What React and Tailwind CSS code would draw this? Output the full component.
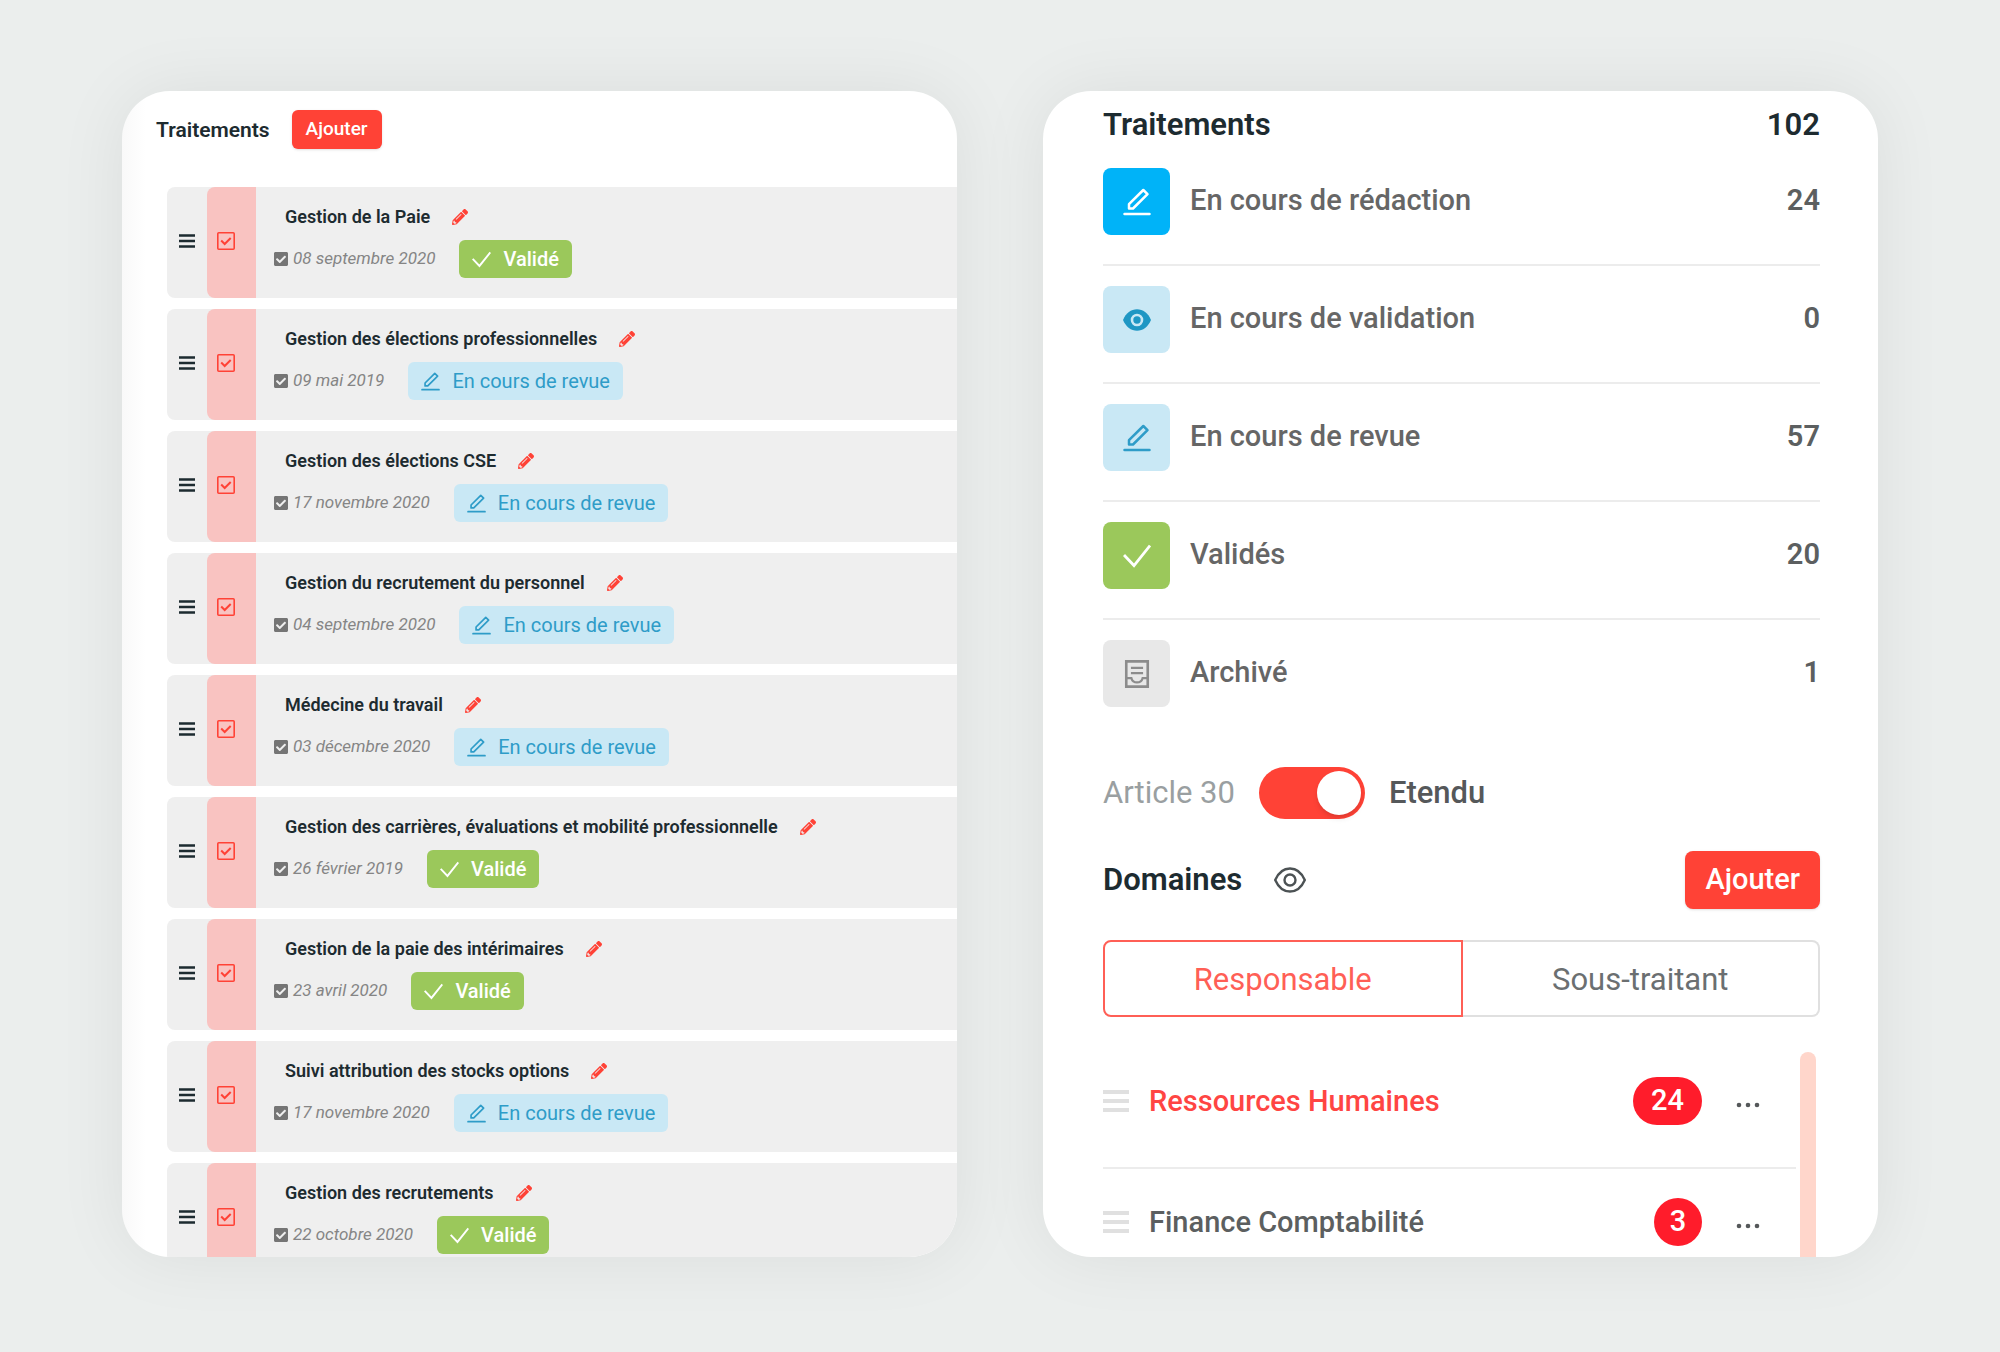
import { useState } from "react";
import { FaCheckSquare, FaPencilAlt } from "react-icons/fa";

const treatments = [
  { title: "Gestion de la Paie", date: "08 septembre 2020", status: "valid" },
  {
    title: "Gestion des élections professionnelles",
    date: "09 mai 2019",
    status: "review",
  },
  {
    title: "Gestion des élections CSE",
    date: "17 novembre 2020",
    status: "review",
  },
  {
    title: "Gestion du recrutement du personnel",
    date: "04 septembre 2020",
    status: "review",
  },
  { title: "Médecine du travail", date: "03 décembre 2020", status: "review" },
  {
    title: "Gestion des carrières, évaluations et mobilité professionnelle",
    date: "26 février 2019",
    status: "valid",
  },
  {
    title: "Gestion de la paie des intérimaires",
    date: "23 avril 2020",
    status: "valid",
  },
  {
    title: "Suivi attribution des stocks options",
    date: "17 novembre 2020",
    status: "review",
  },
  { title: "Gestion des recrutements", date: "22 octobre 2020", status: "valid" },
];

const stats = [
  {
    label: "En cours de rédaction",
    count: 24,
    icon: EditIcon,
    tile: "bg-[#00b3f8] text-white",
  },
  {
    label: "En cours de validation",
    count: 0,
    icon: EyeSolidIcon,
    tile: "bg-[#c9e8f5] text-[#1f97c4]",
  },
  {
    label: "En cours de revue",
    count: 57,
    icon: EditIcon,
    tile: "bg-[#c9e8f5] text-[#2e9cc8]",
  },
  {
    label: "Validés",
    count: 20,
    icon: CheckIcon,
    tile: "bg-[#9bc85b] text-white",
  },
  {
    label: "Archivé",
    count: 1,
    icon: ArchiveIcon,
    tile: "bg-[#e8e8e8] text-[#8c8c8c]",
  },
];

const domains = [
  { name: "Ressources Humaines", count: 24 },
  { name: "Finance Comptabilité", count: 3 },
];

function EditIcon({ className }) {
  return (
    <svg
      className={className}
      viewBox="0 0 28 28"
      fill="none"
      stroke="currentColor"
      strokeWidth="2.5"
      aria-hidden="true"
    >
      <path d="M6 20.5v-4.3L20.3 2l4.2 4.2L10 20.500z" strokeLinejoin="round" />
      <path d="M1.5 26h25" strokeLinecap="round" />
    </svg>
  );
}

function CheckIcon({ className }) {
  return (
    <svg
      className={className}
      viewBox="0 0 28 28"
      fill="none"
      stroke="currentColor"
      strokeWidth="2.8"
      aria-hidden="true"
    >
      <path d="M1 13 11 23.500 27 3.500" />
    </svg>
  );
}

function EyeSolidIcon({ className }) {
  return (
    <svg className={className} viewBox="0 0 28 28" fill="none" aria-hidden="true">
      <path
        d="M0 14C3 7 8 3.300 14 3.300S25 7 28 14c-3 7-8 10.700-14 10.700S3 21 0 14z"
        fill="currentColor"
      />
      <circle cx="14" cy="14" r="5" stroke="#c9e8f5" strokeWidth="2.600" />
    </svg>
  );
}

function EyeIcon({ className }) {
  return (
    <svg
      className={className}
      viewBox="0 0 32 26"
      fill="none"
      stroke="currentColor"
      strokeWidth="2.400"
      aria-hidden="true"
    >
      <path d="M1.200 13C4.500 5.500 9.800 1.500 16 1.500S27.500 5.500 30.800 13C27.500 20.500 22.200 24.500 16 24.500S4.500 20.500 1.200 13z" />
      <circle cx="16" cy="13" r="5.500" />
    </svg>
  );
}

function ArchiveIcon({ className }) {
  return (
    <svg
      className={className}
      viewBox="0 0 30 30"
      fill="none"
      stroke="currentColor"
      strokeWidth="2.800"
      aria-hidden="true"
    >
      <path d="M3.500 1.500h23v27h-23z" />
      <path d="M8.500 8.500h13M8.500 14h13" strokeWidth="2.400" />
      <path
        d="M3.500 19.500h5.500c.8 3 2.800 4.500 6 4.500s5.200-1.500 6-4.500h5.500"
        strokeWidth="2.400"
      />
    </svg>
  );
}

function CheckBoxIcon({ className }) {
  return (
    <svg
      className={className}
      viewBox="0 0 18 18"
      fill="none"
      stroke="currentColor"
      strokeWidth="1.600"
      aria-hidden="true"
    >
      <rect x=".8" y=".8" width="16.400" height="16.400" rx="1" />
      <path d="m4.200 8.500 3.500 3.500 6-6" strokeWidth="2" />
    </svg>
  );
}

function DragIcon({ className }) {
  return (
    <svg
      className={className}
      viewBox="0 0 26 24"
      stroke="currentColor"
      strokeWidth="4"
      aria-hidden="true"
    >
      <path d="M0 3h26M0 12h26M0 21h26" />
    </svg>
  );
}

function ListIcon({ className }) {
  return (
    <svg
      className={className}
      viewBox="0 0 16 14"
      stroke="currentColor"
      strokeWidth="2.600"
      aria-hidden="true"
    >
      <path d="M0 1.500h16M0 7h16M0 12.500h16" />
    </svg>
  );
}

function StatusPill({ status }) {
  if (status === "valid") {
    return (
      <span className="flex h-[38px] items-center gap-3 rounded-md bg-[#9bc85b] px-[13px] text-xl font-medium text-white">
        <CheckIcon className="size-[19px]" />
        Validé
      </span>
    );
  }

  return (
    <span className="flex h-[38px] items-center gap-3 rounded-md bg-[#c9e8f5] px-[13px] text-xl whitespace-nowrap text-[#2e9cc8]">
      <EditIcon className="size-[19px]" />
      En cours de revue
    </span>
  );
}

function TreatmentRow({ treatment }) {
  return (
    <li className="flex h-[111px] shrink-0 rounded-l-lg bg-[#efefef]">
      <button
        type="button"
        aria-label="Déplacer"
        className="flex w-10 items-center justify-center pb-1 text-[#1d2b30]"
      >
        <ListIcon className="h-3.5 w-4" />
      </button>
      <button
        type="button"
        aria-label="Sélectionner"
        className="flex w-[49px] items-center rounded-l-lg bg-[#f9c3c1] pb-1 pl-2.5 text-[#ff4236]"
      >
        <CheckBoxIcon className="size-[18px]" />
      </button>
      <div className="flex flex-col gap-[9px] pt-4 pl-[17px]">
        <div className="flex items-center gap-[22px] pl-3">
          <h3 className="text-lg leading-7 font-semibold whitespace-nowrap text-[#1d2b30]">
            {treatment.title}
          </h3>
          <button type="button" aria-label="Modifier" className="text-[#ff4236]">
            <FaPencilAlt className="size-4" />
          </button>
        </div>
        <div className="flex items-center">
          <FaCheckSquare className="mr-1 size-4 text-[#757575]" />
          <time className="mr-6 text-[17px] whitespace-nowrap text-[#858585] italic">
            {treatment.date}
          </time>
          <StatusPill status={treatment.status} />
        </div>
      </div>
    </li>
  );
}

function TreatmentsPanel() {
  return (
    <section className="overflow-hidden rounded-[48px] bg-linear-to-r from-[#f9f9f9] to-white to-[24px] shadow-[0_0_70px_rgba(0,0,0,0.07)]">
      <header className="flex items-center gap-[22px] pt-[19px] pl-[34px]">
        <h2 className="text-[21px] leading-8 font-semibold text-[#1d2b30]">
          Traitements
        </h2>
        <button
          type="button"
          className="h-[39px] rounded-md bg-[#ff4236] px-3.5 text-[19px] font-medium text-white shadow-sm"
        >
          Ajouter
        </button>
      </header>
      <ul className="mt-[38px] flex flex-col gap-[11px] pl-[45px]">
        {treatments.map((treatment) => (
          <TreatmentRow key={treatment.title} treatment={treatment} />
        ))}
      </ul>
    </section>
  );
}

function StatRow({ stat }) {
  const Icon = stat.icon;

  return (
    <li className="flex items-start border-b-2 border-[#ececec] pt-5 pb-[29px] first:pt-0 last:border-0 last:pb-0">
      <span
        className={`flex size-[67px] items-center justify-center rounded-lg ${stat.tile}`}
      >
        <Icon className="size-7" />
      </span>
      <span className="ml-5 flex-1 text-[29px] leading-[64px] font-medium text-[#666]">
        {stat.label}
      </span>
      <span className="text-[29px] leading-[64px] font-semibold text-[#5c5f60]">
        {stat.count}
      </span>
    </li>
  );
}

function SummaryPanel() {
  const [extended, setExtended] = useState(true);
  const [role, setRole] = useState("Responsable");

  return (
    <section className="flex flex-col overflow-hidden rounded-[48px] bg-white pt-3 pr-[58px] pl-[60px] shadow-[0_0_70px_rgba(0,0,0,0.07)]">
      <h2 className="flex justify-between text-[31px] leading-[44px] font-semibold text-[#1d2b30]">
        <span>Traitements</span>
        <span>102</span>
      </h2>

      <ul className="mt-[21px]">
        {stats.map((stat) => (
          <StatRow key={stat.label} stat={stat} />
        ))}
      </ul>

      <label className="mt-[60px] flex items-center text-[31px] leading-[52px]">
        <span className="text-[#9a9fa1]">Article 30</span>
        <input
          type="checkbox"
          role="switch"
          checked={extended}
          onChange={() => setExtended(!extended)}
          className="peer sr-only"
        />
        <span className="mx-6 flex h-[52px] w-[106px] items-center rounded-full bg-[#c4c4c4] p-1 peer-checked:justify-end peer-checked:bg-[#ff4236]">
          <span className="size-11 rounded-full bg-white shadow-md" />
        </span>
        <span className="font-medium text-[#55585a]">Etendu</span>
      </label>

      <div className="mt-8 flex items-center">
        <h2 className="text-[31px] leading-[44px] font-semibold text-[#1d2b30]">
          Domaines
        </h2>
        <button
          type="button"
          aria-label="Afficher les domaines"
          className="ml-8 text-[#4c5254]"
        >
          <EyeIcon className="h-[26px] w-8" />
        </button>
        <button
          type="button"
          className="ml-auto h-[58px] rounded-lg bg-[#ff4236] px-5 text-[29px] font-medium text-white shadow-sm"
        >
          Ajouter
        </button>
      </div>

      <div className="mt-[31px] flex h-[77px] shrink-0">
        {["Responsable", "Sous-traitant"].map((name) => (
          <button
            key={name}
            type="button"
            aria-pressed={role === name}
            onClick={() => setRole(name)}
            className={`flex-1 border-2 pt-1 text-[31px] first:rounded-l-lg last:rounded-r-lg ${
              role === name
                ? "border-[#ff5f56] text-[#ff5f56]"
                : "border-[#e0e0e0] text-[#6b6f71] first:border-r-0 last:border-l-0"
            }`}
          >
            {name}
          </button>
        ))}
      </div>

      <div className="mt-[35px] flex min-h-0 flex-1">
        <ul className="flex-1">
          {domains.map((domain, index) => (
            <li
              key={domain.name}
              className="flex items-center border-b-2 border-[#ececec] pt-[29px] pb-[42px] first:pt-[25px] last:border-0"
            >
              <DragIcon className="h-6 w-[26px] text-[#e0e0e0]" />
              <a
                href="#"
                className={`ml-5 text-[29px] leading-[48px] font-medium ${
                  index === 0 ? "text-[#ff4543]" : "text-[#5c5f60]"
                }`}
              >
                {domain.name}
              </a>
              <span
                className={`ml-auto flex h-12 items-center justify-center rounded-full bg-[#ff1c2b] text-[29px] font-medium text-white ${
                  domain.count < 10 ? "w-12" : "px-[18px]"
                }`}
              >
                {domain.count}
              </span>
              <button
                type="button"
                aria-label="Options"
                className="mr-9 ml-[34px] text-[#55585a]"
              >
                <svg className="h-5 w-6" viewBox="0 0 24 20" fill="currentColor">
                  <circle cx="3" cy="14" r="2.300" />
                  <circle cx="12" cy="14" r="2.300" />
                  <circle cx="21" cy="14" r="2.300" />
                </svg>
              </button>
            </li>
          ))}
        </ul>
        <div className="mx-1 w-4 rounded-t-full bg-[#ffd6cb]" />
      </div>
    </section>
  );
}

export default function App() {
  return (
    <main className="grid h-screen grid-cols-2 gap-[86px] bg-[#ebeeed] px-[122px] pt-[91px] pb-[95px] font-[Roboto,sans-serif]">
      <TreatmentsPanel />
      <SummaryPanel />
    </main>
  );
}
